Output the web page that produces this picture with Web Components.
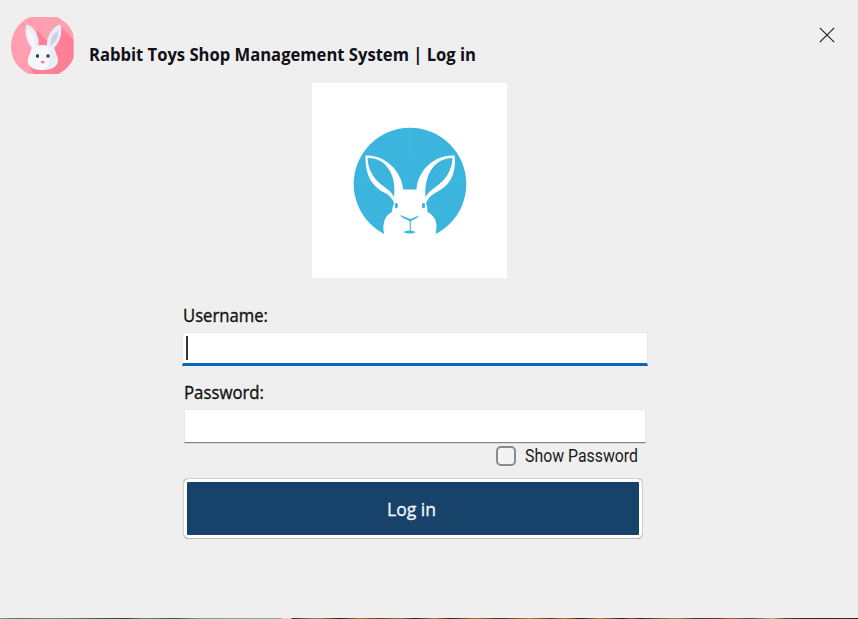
<!DOCTYPE html>
<html lang="en">
<head>
<meta charset="utf-8">
<title>Rabbit Toys Shop Management System | Log in</title>
<style>
html,body{margin:0;height:100%;background:#efefef;overflow:hidden}
</style>
</head>
<body>
<login-window></login-window>
<script>
const define = (name, html, connected) => customElements.define(name, class extends HTMLElement {
  constructor() {
    super();
    this.attachShadow({ mode: 'open' }).innerHTML = html;
  }
  connectedCallback() { if (connected) connected.call(this, this.shadowRoot); }
});

/* One line of text condensed or widened to the width attribute. */
define('fit-text', `<style>
:host{display:block;white-space:nowrap;font-family:"Open Sans","Noto Sans",sans-serif;line-height:24px;height:24px}
span{display:inline-block;transform-origin:0 0}
</style><span><slot></slot></span>`, function (root) {
  const span = root.querySelector('span');
  const width = +this.getAttribute('width');
  this.style.width = width + 'px';
  span.style.transform = `scaleX(${width / span.getBoundingClientRect().width})`;
});

define('app-avatar', `<style>:host{display:block;width:64px;height:58px}svg{display:block}</style>
<svg width="64" height="58" viewBox="11 17 64 58">
<defs><clipPath id="a"><path d="M30 17H57C65 21 71 27 73.5 35V58C70 66 64 71 58 74H29C18 69 11 59 11 47C11 34 18 22 30 17Z"/></clipPath></defs>
<g clip-path="url(#a)"><path fill="#ff9faf" d="M10 16h65v60H10z"/><path fill="#ff8096" d="M37 30L48 42L60 26L75 41V76H35L29 65Z"/></g>
<path fill="#e9edf7" d="M26.500 24.500C34 26 40 36 38.5 47L32 48C26 42 24 31 26.500 24.500Z"/>
<path fill="#e9edf7" d="M60.300 24.500C53 26 46 36 47 47L54 48C60 42 63 32 60.300 24.500Z"/>
<path fill="#f7f5f9" d="M27.5 29C34 34 35 39 35 47H32C28 41 26 34 27.5 29Z"/>
<path fill="#cbd2e2" d="M58.5 31C53 33 50 38 50.500 46C56 42 59 36 58.5 31Z"/>
<path fill="#e9edf7" d="M32 48C36 44 50 44 54 48C56 52 56 54 57 56C61 66 52 70 43 70C33 70 25 66 29 56C31 54 30 51 32 48Z"/>
<path fill="#f6f7fc" d="M32 48C36 45 50 44 50 51C48 60 51 66 43 70C33 70 25 66 29 56C31 54 30 51 32 48Z"/>
<path fill="#35373f" d="M36 54.500h3v3h-3zM46.500 54.500h3v3h-3z"/><path fill="#ff7689" d="M40.500 61H45L43.500 63.500H42Z"/></svg>`);

define('rabbit-logo', `<style>:host{display:block;background:#fff;width:195px;height:195px}svg{display:block}</style>
<svg width="195" height="195" viewBox="312 83 195 195">
<circle cx="410" cy="184" r="56.300" fill="#3bb5de"/>
<path stroke="#50bbdc" stroke-width="1.200" stroke-dasharray="3 1" fill="none" d="M410 129V158M356 181H386M433 181H463"/>
<path fill="#fff" d="M365.500 155.500C382 154 401 168 403.300 189.500H416.500C418 168 437 154 454.500 155.500C457 176 448 187 435 193C429 197 427 200 426 204C428 207 427 210 427.500 212C434 215 438 222 436 231L435 242H385L384 233C382 224 385 215 392 212C392 209 393 206 394 203C393 200 391 197 387 194C374 188 365 178 365.500 155.500Z"/>
<path fill="#3bb5de" d="M367.500 158C385 157 397 174 394 197C391 191 387 189 383 186C375 180 368 171 367.500 158ZM452.500 158C435 158 424 174 425.500 197C429 191 433 189 437 186C445 180 452 171 452.500 158Z"/>
<ellipse cx="396.300" cy="205.500" rx="1.600" ry="2.800" fill="#3bb5de"/><ellipse cx="423.500" cy="205.500" rx="1.600" ry="2.800" fill="#3bb5de"/>
<path fill="#3bb5de" d="M400 215L410.300 219L419 215.500C417 219 413 219 410.800 221.500V230.500Q414 231 416 232Q410 235 403 232Q406 230.500 409.700 230.500V221.500C408 219 402 219 400 215Z"/>
</svg>`);

define('close-button', `<style>:host{display:block;width:16px;height:16px}svg{display:block}</style>
<svg width="16" height="16"><path d="M.8.800L15.200 15.200M15.200.800L.8 15.200" stroke="#222" stroke-width="1.200"/></svg>`);

define('text-field', `<style>
:host{display:block;box-sizing:border-box;width:462px;height:34px;background:#fff;border:1px solid #e8e8e8;border-bottom:1px solid #858585;box-shadow:0 1px #d8d8d8}
:host([focused]){width:466px;border:1px solid #e2e8ec;border-bottom:3px solid #0067c0;box-shadow:none}
i{display:none;width:2px;height:24px;margin:3px 0 0 3px;background:#333}
:host([focused]) i{display:block}
</style><i></i>`);

define('check-option', `<style>
:host{display:flex;align-items:center;gap:9px;color:#1b1b22}
i{box-sizing:border-box;width:20px;height:20px;border:2px solid #8a8a8a;border-radius:5px;background:#f3f3f3}
fit-text{font-family:Roboto,sans-serif;font-size:17.500px}
</style><i></i><fit-text width="113"><slot></slot></fit-text>`);

define('login-button', `<style>
:host{display:flex;align-items:center;justify-content:center;box-sizing:border-box;width:460px;height:61px;padding-right:3px;border:1px solid #d0d0d0;border-bottom-color:#bbb;border-radius:5px;background:#17436b;box-shadow:inset 0 0 0 3px #fff;color:#f4f6f8;font-size:17.500px;-webkit-text-stroke:.3px}
</style><slot></slot>`);

/* Thin slice of the desktop wallpaper visible under the window. */
define('desktop-edge', `<style>:host{display:block;height:1px;background:linear-gradient(90deg,#62aa93 0,#397f61 20px,#58a080 50px,#277852 90px,#154a3b 125px,#4b9873 145px,#235e43 175px,#65ae94 200px,#6fb29c 280px,#f2d0a0 282px,#f2d0a0 291px,#3c3028 292px,#75736d 310px,#af7b35 320px,#2c2023 340px,#a3752e 360px,#6d3b20 380px,#8b7142 400px,#2a2024 415px,#b1822d 435px,#302021 450px,#aa762c 475px,#422d22 500px,#b68338 530px,#60351f 550px,#b07a2d 565px,#301b20 580px,#ad873e 600px,#35161c 622px,#9d4c20 632px,#302820 640px,#8c963d 675px,#254b3c 695px,#762b1c 715px,#b65b2b 732px,#365148 750px,#b3b65d 772px,#40522c 785px,#451c23 805px,#262126 825px,#5a2027 845px,#291c20 858px)}</style>`);

define('login-window', `<style>
:host{display:grid;grid-template-rows:618px 1px;width:858px;height:619px;background:#efefef;color:#111}
main{display:flow-root}
header{display:flex;align-items:flex-start;height:66px;padding:17px 23px 0 11px}
.title{margin:25px 0 0 14px;font-size:18px;font-weight:700;color:#101018}
close-button{margin:10px 0 0 auto}
rabbit-logo{margin:0 0 25px 312px}
form{margin-left:182px}
.label{font-size:17.500px;font-weight:500;-webkit-text-stroke:.35px}
.password{margin:14px 0 5px 2px}
.user{margin:0 0 5px 1px}
.pw{margin-left:2px}
check-option{margin:1px 0 0 314px}
login-button{margin:10px 0 0 1px}
</style>
<main><header><app-avatar></app-avatar><fit-text class="title" width="387">Rabbit Toys Shop Management System | Log in</fit-text><close-button></close-button></header>
<rabbit-logo></rabbit-logo>
<form><fit-text class="label user" width="85">Username:</fit-text><text-field focused></text-field>
<fit-text class="label password" width="80">Password:</fit-text><text-field class="pw"></text-field>
<check-option>Show Password</check-option>
<login-button><fit-text width="49">Log in</fit-text></login-button></form></main>
<desktop-edge></desktop-edge>`);
</script>
</body>
</html>
